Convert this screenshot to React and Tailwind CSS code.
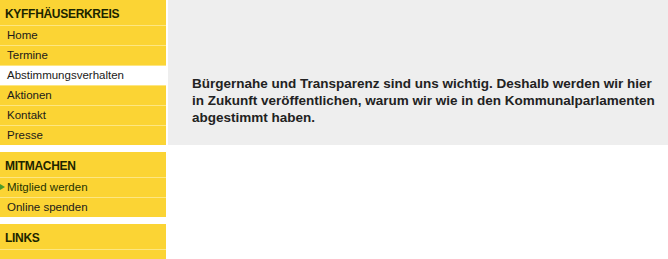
import React from 'react';

const sections = [
    {
        title: "KYFFHÄUSERKREIS",
        items: [
            { label: "Home" },
            { label: "Termine" },
            { label: "Abstimmungsverhalten", active: true },
            { label: "Aktionen" },
            { label: "Kontakt" },
            { label: "Presse" }
        ]
    },
    {
        title: "MITMACHEN",
        items: [
            { label: "Mitglied werden", arrow: true },
            { label: "Online spenden" }
        ]
    },
    {
        title: "LINKS",
        items: [{ label: "" }]
    }
];

const Sidebar = () => (
    <div className="w-[166px] shrink-0 flex flex-col gap-[7px]">
        {sections.map((section, i) => (
            <div key={i} className="bg-[#fbd434]">
                <div className="h-[25px] flex items-center pt-[3px] pl-[5px] text-[12px] font-bold text-[#1c2500] tracking-[-0.3px]">
                    {section.title}
                </div>
                {section.items.map((item, j) => (
                    <div key={j} className="border-t border-[#fde682]">
                        <div
                            className={
                                item.active
                                    ? "relative h-[19px] flex items-center pl-[7px] text-[11.5px] bg-white text-[#1a1a1a]"
                                    : "relative h-[19px] flex items-center pl-[7px] text-[11.5px] text-[#1a1a1a]"
                            }
                        >
                            {item.arrow && (
                                <span className="absolute left-0 top-[6px] w-0 h-0 border-y-[3px] border-y-transparent border-l-[5px] border-l-[#4c9a2a]" />
                            )}
                            <span className={item.arrow ? "text-[#1f3300]" : ""}>{item.label}</span>
                        </div>
                    </div>
                ))}
            </div>
        ))}
    </div>
);

export default function App() {
    return (
        <div
            className="w-[668px] h-[259px] bg-white flex gap-[2px] overflow-hidden"
            style={{ fontFamily: '"Liberation Sans", Arial, sans-serif' }}
        >
            <Sidebar />
            <div className="flex-1">
                <div className="h-[145px] bg-[#eeeeee] pl-[24px] pt-[75px]">
                    <p className="w-[464px] text-[13.5px] leading-[17px] font-bold text-[#222222]">
                        Bürgernahe und Transparenz sind uns wichtig. Deshalb werden wir hier in Zukunft
                        veröffentlichen, warum wir wie in den Kommunalparlamenten abgestimmt haben.
                    </p>
                </div>
            </div>
        </div>
    );
}
